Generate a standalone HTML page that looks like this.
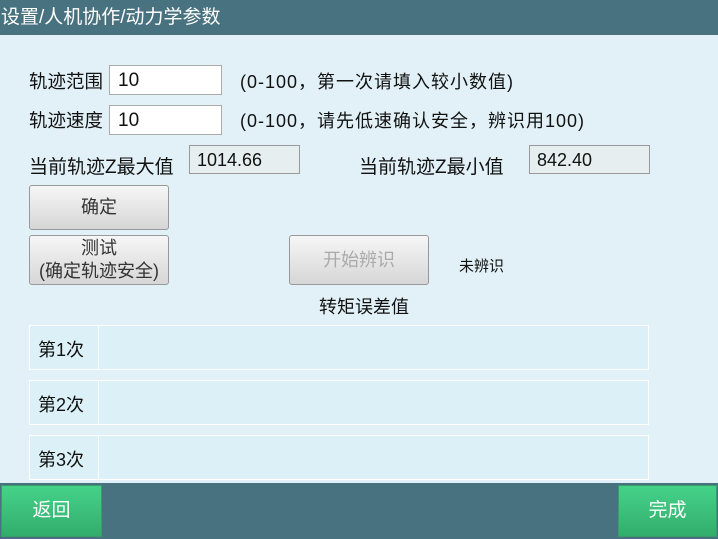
<!DOCTYPE html>
<html><head><meta charset="utf-8"><style>
*{margin:0;padding:0;box-sizing:border-box}
body{width:718px;height:539px;overflow:hidden;background:#e2f1f7;font-family:"Liberation Sans","Noto Sans CJK SC",sans-serif;color:#111;position:relative}
.a{position:absolute;white-space:nowrap}
.hdr{left:0;top:0;width:718px;height:35px;background:#48727f;color:#fff;font-size:19px;line-height:35px;padding-left:1px}
.inp{background:#fff;border:1px solid #aaa;font-size:19px;padding-left:8px;line-height:30px}
.ro{background:#e6eef0;border:1px solid #999;font-size:18px;padding-left:7px;line-height:29px}
.btn{border:1px solid #999;border-radius:3px;background:linear-gradient(#f6f6f6,#d6d6d6);text-align:center;color:#333;font-size:18px}
.lbl{font-size:18px}
.hint{font-size:18px;letter-spacing:1px}
.cell{background:#dbf1f7;border:1px solid #fff}
.g{background:linear-gradient(#45d289,#33ad6c);color:#fff;font-size:19px;text-align:center;line-height:50px;border:1px solid #3a9c6a}
</style></head><body>
<div class="a hdr">设置/人机协作/动力学参数</div>
<div class="a lbl" style="left:29px;top:68px;font-size:18.5px">轨迹范围</div>
<div class="a inp" style="left:109px;top:65px;width:113px;height:30px">10</div>
<div class="a hint" style="left:240px;top:68px">(0-100，第一次请填入较小数值)</div>
<div class="a lbl" style="left:29px;top:107px;font-size:18.5px">轨迹速度</div>
<div class="a inp" style="left:109px;top:105px;width:113px;height:30px">10</div>
<div class="a hint" style="left:240px;top:107px">(0-100，请先低速确认安全，辨识用100)</div>
<div class="a lbl" style="left:29px;top:152px;font-size:19px">当前轨迹Z最大值</div>
<div class="a ro" style="left:189px;top:145px;width:111px;height:29px">1014.66</div>
<div class="a lbl" style="left:359px;top:152px;font-size:19px">当前轨迹Z最小值</div>
<div class="a ro" style="left:529px;top:145px;width:121px;height:29px">842.40</div>
<div class="a btn" style="left:29px;top:185px;width:140px;height:45px;line-height:43px">确定</div>
<div class="a btn" style="left:29px;top:235px;width:140px;height:50px;line-height:23px;padding-top:1px">测试<br>(确定轨迹安全)</div>
<div class="a btn" style="left:289px;top:235px;width:140px;height:50px;line-height:48px;color:#aaa">开始辨识</div>
<div class="a" style="left:459px;top:255px;font-size:15px">未辨识</div>
<div class="a lbl" style="left:319px;top:293px">转矩误差值</div>
<div class="a cell" style="left:29px;top:325px;width:70px;height:45px"></div>
<div class="a cell" style="left:98px;top:325px;width:551px;height:45px"></div>
<div class="a lbl" style="left:38px;top:336px">第1次</div>
<div class="a cell" style="left:29px;top:380px;width:70px;height:45px"></div>
<div class="a cell" style="left:98px;top:380px;width:551px;height:45px"></div>
<div class="a lbl" style="left:38px;top:391px">第2次</div>
<div class="a cell" style="left:29px;top:435px;width:70px;height:45px"></div>
<div class="a cell" style="left:98px;top:435px;width:551px;height:45px"></div>
<div class="a lbl" style="left:38px;top:446px">第3次</div>
<div class="a" style="left:0;top:483px;width:718px;height:56px;background:#48727f"></div>
<div class="a g" style="left:1px;top:485px;width:101px;height:52px">返回</div>
<div class="a g" style="left:618px;top:485px;width:99px;height:52px">完成</div>
</body></html>
